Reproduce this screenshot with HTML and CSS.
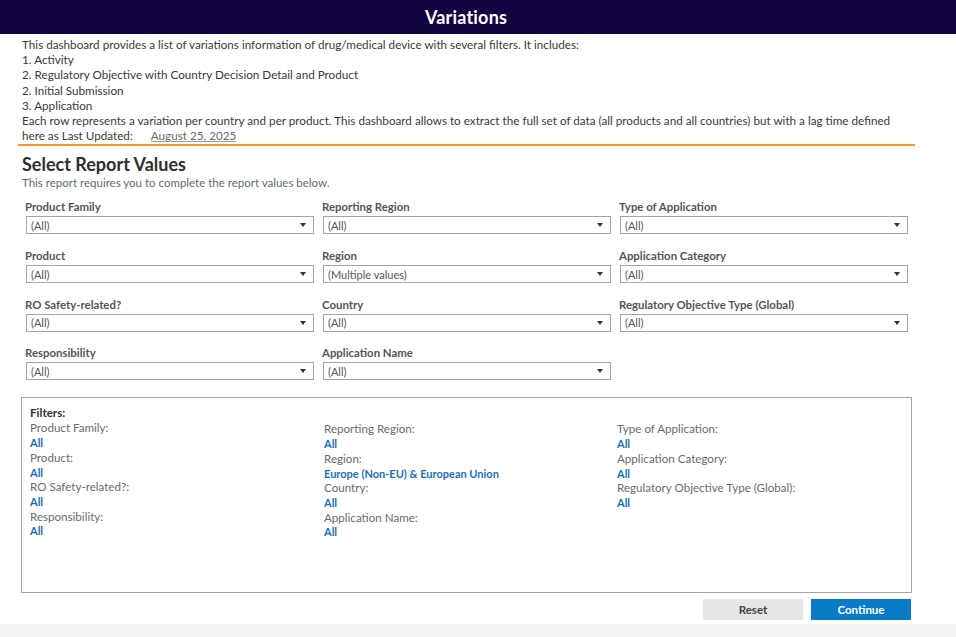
FILE: index.html
```html
<!DOCTYPE html>
<html>
<head>
<meta charset="utf-8">
<link rel="stylesheet" href="styles.css">
</head>
<body>
<header class="topbar"><h1 class="title">Variations</h1></header>
<div class="intro">
  <p>This dashboard provides a list of variations information of drug/medical device with several filters. It includes:</p>
  <p>1. Activity</p>
  <p>2. Regulatory Objective with Country Decision Detail and Product</p>
  <p>2. Initial Submission</p>
  <p>3. Application</p>
  <p>Each row represents a variation per country and per product. This dashboard allows to extract the full set of data (all products and all countries) but with a lag time defined</p>
  <p>here as Last Updated: <span class="date">August 25, 2025</span></p>
</div>
<div class="rule"></div>
<section class="report">
  <h2 class="report-title">Select Report Values</h2>
  <p class="report-sub">This report requires you to complete the report values below.</p>
  <div class="grid">
    <div class="field"><label class="lbl">Product Family</label><div class="select"><span>(All)</span><i class="arrow"></i></div></div>
    <div class="field"><label class="lbl">Reporting Region</label><div class="select"><span>(All)</span><i class="arrow"></i></div></div>
    <div class="field"><label class="lbl">Type of Application</label><div class="select"><span>(All)</span><i class="arrow"></i></div></div>
    <div class="field"><label class="lbl">Product</label><div class="select"><span>(All)</span><i class="arrow"></i></div></div>
    <div class="field"><label class="lbl">Region</label><div class="select"><span>(Multiple values)</span><i class="arrow"></i></div></div>
    <div class="field"><label class="lbl">Application Category</label><div class="select"><span>(All)</span><i class="arrow"></i></div></div>
    <div class="field"><label class="lbl">RO Safety-related?</label><div class="select"><span>(All)</span><i class="arrow"></i></div></div>
    <div class="field"><label class="lbl">Country</label><div class="select"><span>(All)</span><i class="arrow"></i></div></div>
    <div class="field"><label class="lbl">Regulatory Objective Type (Global)</label><div class="select"><span>(All)</span><i class="arrow"></i></div></div>
    <div class="field"><label class="lbl">Responsibility</label><div class="select"><span>(All)</span><i class="arrow"></i></div></div>
    <div class="field"><label class="lbl">Application Name</label><div class="select"><span>(All)</span><i class="arrow"></i></div></div>
  </div>
  <div class="filters">
    <div class="fcol">
      <div class="fhead">Filters:</div>
      <div class="fk">Product Family:</div><div class="fv">All</div>
      <div class="fk">Product:</div><div class="fv">All</div>
      <div class="fk">RO Safety-related?:</div><div class="fv">All</div>
      <div class="fk">Responsibility:</div><div class="fv">All</div>
    </div>
    <div class="fcol fcol-off">
      <div class="fk">Reporting Region:</div><div class="fv">All</div>
      <div class="fk">Region:</div><div class="fv">Europe (Non-EU) &amp; European Union</div>
      <div class="fk">Country:</div><div class="fv">All</div>
      <div class="fk">Application Name:</div><div class="fv">All</div>
    </div>
    <div class="fcol fcol-off">
      <div class="fk">Type of Application:</div><div class="fv">All</div>
      <div class="fk">Application Category:</div><div class="fv">All</div>
      <div class="fk">Regulatory Objective Type (Global):</div><div class="fv">All</div>
    </div>
  </div>
  <div class="actions">
    <button class="btn btn-reset">Reset</button>
    <button class="btn btn-continue">Continue</button>
  </div>
</section>
<footer class="bottom"></footer>
</body>
</html>
```

FILE: styles.css
```css
* { box-sizing: border-box; }
html, body { margin: 0; padding: 0; }
body {
  width: 956px;
  height: 637px;
  overflow: hidden;
  background: #ffffff;
  font-family: Lato, "Liberation Sans", sans-serif;
  color: #333333;
  display: flex;
  flex-direction: column;
}
.topbar {
  height: 34px;
  background: #120441;
  display: flex;
  align-items: center;
  justify-content: center;
  padding-right: 24px;
}
.title {
  margin: 0;
  color: #ffffff;
  font-size: 18px;
  font-weight: 700;
  letter-spacing: 0.2px;
}
.intro {
  padding: 3px 0 0 22px;
  font-size: 11.7px;
  line-height: 15.2px;
  color: #3a3a3a;
}
.intro p { margin: 0; white-space: nowrap; }
.date {
  display: inline-block;
  margin-left: 15px;
  color: #6a6a6a;
  text-decoration: underline;
  text-decoration-color: #9a9a9a;
}
.rule {
  margin: 1px 41px 0 18px;
  border-top: 2px solid #f5972c;
}
.report { padding: 0 0 0 22px; flex: 1; }
.report-title {
  margin: 7px 0 0 0;
  font-size: 18px;
  line-height: 22px;
  font-weight: 700;
  color: #2e2e2e;
}
.report-sub {
  margin: 1px 0 0 0;
  font-size: 11.5px;
  line-height: 14px;
  color: #5d6b78;
}
.grid {
  display: grid;
  grid-template-columns: repeat(3, 288px);
  column-gap: 9px;
  row-gap: 13.7px;
  margin: 9px 0 0 4px;
}
.field { display: flex; flex-direction: column; }
.lbl {
  font-size: 11.4px;
  line-height: 15px;
  font-weight: 700;
  color: #555555;
  margin-left: -1px;
  margin-bottom: 2px;
}
.select {
  height: 18px;
  border: 1px solid #a5a5a5;
  display: flex;
  align-items: center;
  justify-content: space-between;
  padding: 0 7px 0 4px;
  font-size: 11px;
  color: #555555;
}
.arrow {
  width: 0; height: 0;
  border-left: 3px solid transparent;
  border-right: 3px solid transparent;
  border-top: 4px solid #333333;
}
.filters {
  margin: 17px 0 0 -1px;
  width: 891px;
  height: 196px;
  border: 1px solid #a6a69a;
  display: grid;
  grid-template-columns: 294px 293px 1fr;
  padding: 6px 0 0 8px;
  font-size: 11.6px;
  line-height: 14.7px;
}
.fhead { font-weight: 700; color: #333333; line-height: 17px; }
.fcol-off { padding-top: 18px; }
.fk { color: #6b6b6b; }
.fv { color: #1a6fbd; font-weight: 700; font-size: 11px; }
.actions {
  display: flex;
  justify-content: flex-end;
  gap: 8px;
  width: 889px;
  margin-top: 6px;
}
.btn {
  width: 100px;
  height: 21px;
  border: none;
  font-family: Lato, "Liberation Sans", sans-serif;
  font-size: 11.5px;
  font-weight: 700;
  padding: 0;
}
.btn-reset { background: #e6e6e6; color: #444444; }
.btn-continue { background: #0a7bc6; color: #ffffff; }
.bottom {
  height: 13px;
  background: #f3f3f3;
}
```
